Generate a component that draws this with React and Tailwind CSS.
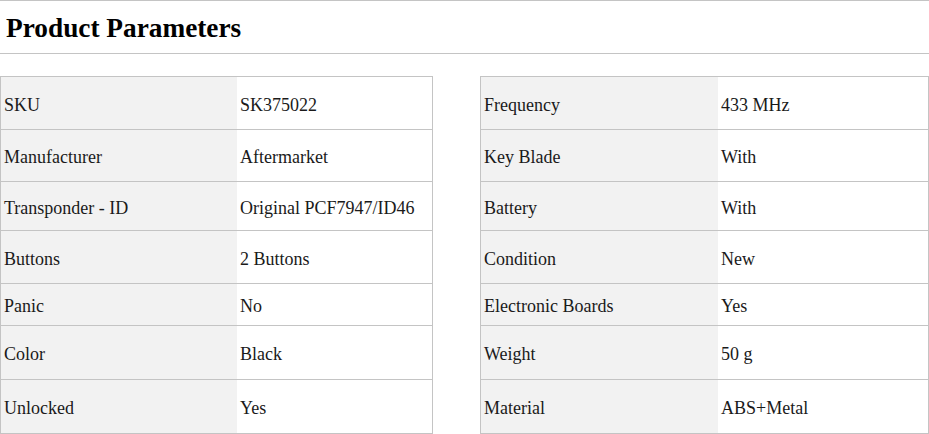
import React from "react";

const left = [
  ["SKU", "SK375022"],
  ["Manufacturer", "Aftermarket"],
  ["Transponder - ID", "Original PCF7947/ID46"],
  ["Buttons", "2 Buttons"],
  ["Panic", "No"],
  ["Color", "Black"],
  ["Unlocked", "Yes"],
];
const right = [
  ["Frequency", "433 MHz"],
  ["Key Blade", "With"],
  ["Battery", "With"],
  ["Condition", "New"],
  ["Electronic Boards", "Yes"],
  ["Weight", "50 g"],
  ["Material", "ABS+Metal"],
];
const heights = ["h-[53px]", "h-[52px]", "h-[49px]", "h-[53px]", "h-[42px]", "h-[54px]", "h-[54px]"];

function Table({ rows, widthClass, labelClass }) {
  return (
    <div className={`${widthClass} border-l border-r border-t border-[#c4c4c4]`}>
      {rows.map(([k, v], i) => (
        <div key={k} className={`flex ${heights[i]} border-b border-[#c4c4c4]`}>
          <div className={`${labelClass} shrink-0 bg-[#f2f2f2] flex items-center pl-[3px] pt-[3px]`}>{k}</div>
          <div className="flex-1 flex items-center pl-[3px] pt-[3px]">{v}</div>
        </div>
      ))}
    </div>
  );
}

export default function App() {
  return (
    <div className="w-[929px] h-[434px] bg-white text-[#1a1a1a] text-[18px] leading-none" style={{ fontFamily: '"Liberation Serif", "Times New Roman", serif' }}>
      <div className="h-[54px] border-t border-b border-[#c4c4c4] flex items-center pl-[6px] pt-[4px]">
        <h2 className="text-[27.3px] font-bold text-black leading-none">Product Parameters</h2>
      </div>
      <div className="mt-[22px] flex gap-[47px]">
        <Table rows={left} widthClass="w-[433px]" labelClass="w-[236px]" />
        <Table rows={right} widthClass="w-[449px]" labelClass="w-[237px]" />
      </div>
    </div>
  );
}
